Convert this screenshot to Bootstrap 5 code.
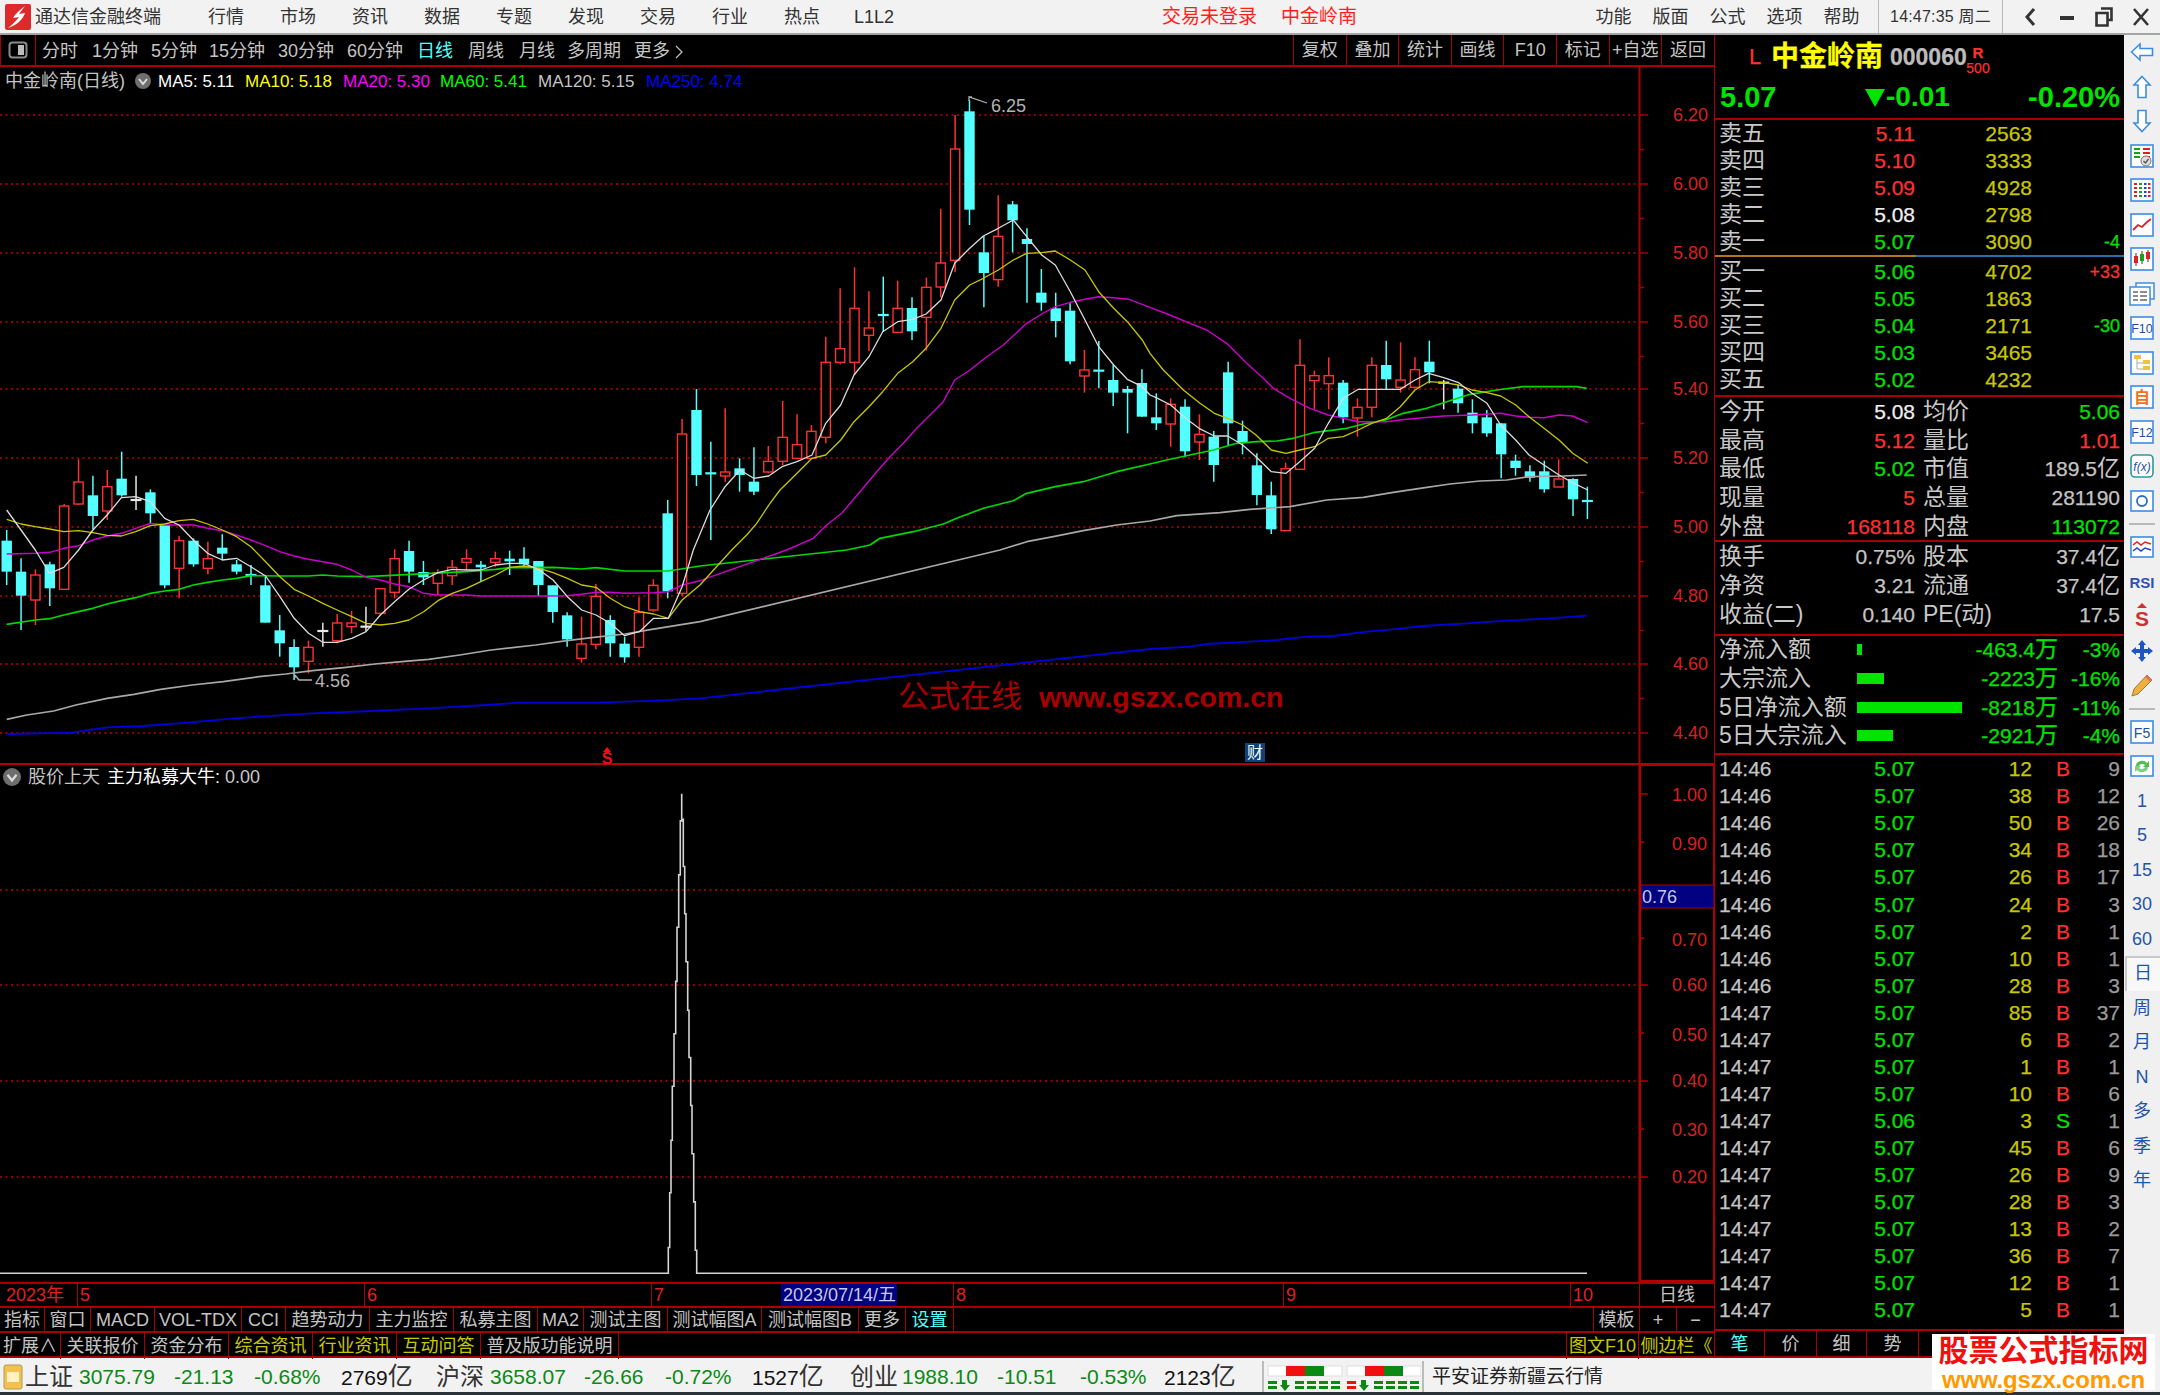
<!DOCTYPE html>
<html lang="zh-CN">
<head>
<meta charset="utf-8">
<title>通达信金融终端</title>
<link rel="stylesheet" href="https://cdn.jsdelivr.net/npm/bootstrap@5.3.0/dist/css/bootstrap.min.css">
<style>
:root{--tx-red:#a80000;--tx-gray:#c4c4c4;--tx-dgray:#9a9a9a;--tx-green:#00e400;--tx-yellow:#c8c800;--tx-pr:#ff3030;--tx-cy:#54ffff;--tx-side:#f0f0f0}
html,body{margin:0;background:#000;overflow:hidden}
.tx-app{width:2160px;height:1395px;font-family:"Liberation Sans","Noto Sans CJK SC",sans-serif;color:var(--tx-gray);position:relative;overflow:hidden;line-height:1}
.tx-title{height:35px;background:#f2f2f2;border-bottom:2px solid #a4a4a4;display:grid;grid-template-columns:35px 155px repeat(10,72px) 252px 119px 304px repeat(5,57px) 8px 125px 8px 38px 36px 37px 38px;align-items:center;color:#333;font-size:18px}
.tx-title>div{text-align:center;white-space:nowrap}
.tx-title .tx-l{text-align:left}
.tx-login{color:#ff1e1e;font-size:19px}
.tx-time{border-left:1px solid #bbb;border-right:1px solid #bbb;height:33px;line-height:33px;font-size:16px;letter-spacing:.2px}
.tx-work{height:1323px;display:grid;grid-template-columns:1714px 410px 36px}
.tx-left{display:flex;flex-direction:column;min-width:0}
.tx-tool{height:32px;border-bottom:2px solid var(--tx-red);display:grid;grid-template-columns:36px 6px 50px 59px 58px 69px 69px 70px 51px 51px 48px 67px 51px 608px repeat(7,52.6px) 1fr;align-items:center;font-size:18px;white-space:nowrap}
.tx-tool>div{padding-top:2px}
.tx-tool .tx-cell{height:30px;line-height:29px;padding-top:1px;text-align:center;border-left:1px solid var(--tx-red)}
.tx-tool .tx-tbtn{height:30px;padding-top:0;border-right:1px solid var(--tx-red);border-left:1px solid var(--tx-red);display:flex;align-items:center;justify-content:center}
.tx-cy{color:var(--tx-cy)}
.tx-yel{color:var(--tx-yellow)}
.tx-chart{height:1215px;position:relative}
.tx-svg{display:block;width:1714px;height:1215px}
.tx-svg text{font-family:"Liberation Sans","Noto Sans CJK SC",sans-serif}
.tx-legend{position:absolute;left:0;top:0;height:28px;width:1000px;padding-left:5px;display:grid;grid-template-columns:130px 23px 87px 98px 97px 98px 108px 1fr;align-items:center;font-size:17px;white-space:nowrap}
.tx-legend .tx-nm{font-size:18px}
.tx-sublegend{position:absolute;left:3px;top:698px;height:24px;display:flex;align-items:center;gap:7px;font-size:18px;white-space:nowrap}
.tx-mark{position:absolute;left:1245px;top:676px;width:20px;height:19px;background:#0c4274;color:#fff;font-size:16px;line-height:19px;text-align:center}
.tx-xaxis{height:24px;border-top:2px solid var(--tx-red);display:grid;grid-template-columns:78px 287px 287px 129px 116px 57px 330px 287px 68px 75px;font-size:18px;color:#e02020;white-space:nowrap}
.tx-xaxis>div{padding-left:2px;line-height:23px;border-right:1px solid var(--tx-red)}
.tx-xaxis .tx-first{padding-left:6px}
.tx-xaxis .tx-date{background:#000080;color:#c8c8e8;padding-left:2px;border-right:0;font-size:18px}
.tx-xaxis .tx-unit{color:var(--tx-gray);text-align:center;padding-left:0;border-right:0;border-left:1px solid var(--tx-red)}
.tx-tabs,.tx-ext{display:grid;border-top:2px solid var(--tx-red);font-size:18px;white-space:nowrap}
.tx-tabs{height:25px;grid-template-columns:45px 46px 64px 87px 44px 84px 84px 84px 46px 84px 94px 97px 47px 48px 1fr 46px 37px 38px}
.tx-ext{height:27px;border-bottom:2px solid var(--tx-red);grid-template-columns:61px 84px 84px 84px 84px 84px 138px 1fr 72px 75px}
.tx-tabs>div{text-align:center;line-height:25px;border-right:1px solid var(--tx-red)}
.tx-ext>div{text-align:center;line-height:26px;border-right:1px solid var(--tx-red)}
.tx-tabs>div:nth-last-child(-n+3){border-right:0;border-left:1px solid var(--tx-red)}
.tx-quote{border-left:1px solid var(--tx-red);display:flex;flex-direction:column;font-size:21px;-webkit-text-stroke:.25px}
.tx-qhead{height:85px;border-bottom:2px solid var(--tx-red);position:relative;padding:0 4px 0 5px}
.tx-qname{height:44px;display:flex;align-items:center;padding-left:29px;white-space:nowrap}
.tx-qname .tx-lm{color:var(--tx-pr);font-size:22px;width:22px}
.tx-qname .tx-cn{color:#ffff00;font-size:28px;font-weight:700;width:119px}
.tx-qname .tx-cd{color:#bcbcbc;font-size:23px;font-weight:700;width:77px}
.tx-rs{display:flex;flex-direction:column;align-items:center;color:var(--tx-pr);font-size:14px;margin-top:6px;gap:1px;width:22px}
.tx-rs b{font-size:15px}
.tx-qprice{height:34px;padding-top:2px;display:grid;grid-template-columns:145px 1fr 1fr;align-items:center;color:var(--tx-green);font-weight:700;font-size:28px;white-space:nowrap;-webkit-text-stroke:0}
.tx-qprice .tx-big{font-size:29px}
.tx-qprice .tx-dn{display:flex;align-items:center;gap:1px}
.tx-qprice>div:nth-child(3){text-align:right}
.tx-book{height:135px;padding:0 3px 0 4px}
.tx-buy{padding-top:1px;height:138px}
.tx-brow{height:27px;display:grid;grid-template-columns:196px 117px 88px;align-items:center}
.tx-lb{font-size:23px;white-space:nowrap;color:#c8c8c8;-webkit-text-stroke:0}
.tx-rt{text-align:right;white-space:nowrap}
.tx-vol{color:var(--tx-yellow)}
.tx-pr{color:var(--tx-pr)}
.tx-gr{color:var(--tx-green)}
.tx-wh{color:#f0f0f0}
.tx-dl{font-size:18px}
.tx-split{height:2px;flex:none;background:linear-gradient(to right,#b07818 0,#b07818 201px,#2a6ea8 201px)}
.tx-sect{border-top:2px solid var(--tx-red);padding:0 3px 0 4px;flex:none}
.tx-sect-b{padding-bottom:5px}
.tx-sect-c{padding-bottom:3px}
.tx-info{height:28.7px;display:grid;grid-template-columns:60px 136px 108px 97px;align-items:center}
.tx-info>.tx-lb2{padding-left:8px}
.tx-flow{height:28.7px;display:grid;grid-template-columns:138px 110px 91px 62px;align-items:center}
.tx-flow .tx-wan{font-size:23px}
.tx-barx{height:11px;background:var(--tx-green)}
.tx-tick{height:27.05px;display:grid;grid-template-columns:196px 117px 40px 48px;align-items:center;color:var(--tx-gray)}
.tx-ticks{flex:1;overflow:hidden;border-top:2px solid var(--tx-red);padding:0 3px 0 4px}
.tx-tick .tx-bs{text-align:center;padding-left:22px}
.tx-tick .tx-ct{color:var(--tx-dgray);text-align:right}
.tx-qtabs{height:29px;flex:none;display:grid;grid-template-columns:50px 52px 50px 52px 50px 51px 51px 1fr;border-top:2px solid var(--tx-red);border-bottom:2px solid var(--tx-red);font-size:18px;-webkit-text-stroke:0}
.tx-qtabs>div{text-align:center;line-height:27px;border-right:1px solid var(--tx-red)}
.tx-side{background:var(--tx-side);display:flex;flex-direction:column;align-items:center;color:#1f55a8;font-size:18px}
.tx-si{height:34.5px;flex:none;display:flex;align-items:center;justify-content:center;width:100%}
.tx-ssep{height:12px;flex:none;width:26px;display:flex;align-items:center}
.tx-ssep::before{content:"";display:block;width:100%;height:2px;background:#b8b8b8}
.tx-active{background:#f8f8f8;box-shadow:inset 2px 2px 0 #c8c8c8;margin-left:2px}
.tx-status{height:37px;background:#f2f2f2;padding-top:3px;border-bottom:3px solid #2a3338;display:grid;grid-template-columns:25px 54px 95px 80px 87px 95px 54px 94px 81px 87px 98px 52px 95px 83px 84px 98px 162px 1fr;align-items:center;font-size:21px;white-space:nowrap;color:#111}
.tx-status .tx-n{color:#0a8a14}
.tx-status .tx-idx{font-size:24px;color:#333}
.tx-status .tx-yi{font-size:25px;color:#333}
.tx-swid{border-left:2px solid #bbb;border-right:2px solid #bbb;height:31px;padding-left:3px;display:flex;align-items:center}
.tx-broker{font-size:19px;color:#222;padding-left:8px}
.tx-logo2{position:absolute;left:1932px;top:1334px;width:223px;height:56px;background:#fff;display:flex;flex-direction:column;align-items:center;justify-content:center;gap:3px}
.tx-logo2 .tx-a{color:#f01010;font-size:30px;font-weight:700;line-height:33px}
.tx-logo2 .tx-b{color:#ff9a00;font-size:24px;font-weight:700;line-height:20px;letter-spacing:-.2px}
</style>
</head>
<body>
<div class="tx-app">
  <header class="tx-title">
    <div class="d-flex align-items-center justify-content-end pe-1">
      <svg width="26" height="26" viewBox="0 0 26 26"><rect width="26" height="26" rx="2" fill="#de2a2a"/><path d="M20 2 C15 6 10 10 8 14 L14 13 C11 17 8 20 3 24 C10 22 18 16 20 9 L14 10 C16 7 18 5 20 2Z" fill="#fff"/></svg>
    </div>
    <div class="tx-l">通达信金融终端</div>
    <div>行情</div><div>市场</div><div>资讯</div><div>数据</div><div>专题</div><div>发现</div><div>交易</div><div>行业</div><div>热点</div><div>L1L2</div>
    <div></div>
    <div class="tx-l tx-login">交易未登录</div>
    <div class="tx-l tx-login">中金岭南</div>
    <div>功能</div><div>版面</div><div>公式</div><div>选项</div><div>帮助</div>
    <div></div>
    <div class="tx-time">14:47:35 周二</div>
    <div></div>
    <div><svg width="14" height="22" viewBox="0 0 14 22"><path d="M11 3 L4 11 L11 19" fill="none" stroke="#333" stroke-width="3"/></svg></div>
    <div><svg width="14" height="6" viewBox="0 0 14 6"><rect y="1" width="14" height="4" fill="#333"/></svg></div>
    <div><svg width="18" height="20" viewBox="0 0 18 20"><path d="M6 1.5H16.5V13H13M1.5 6H12.5V18.5H1.5Z" fill="none" stroke="#333" stroke-width="2.6"/></svg></div>
    <div><svg width="18" height="20" viewBox="0 0 18 20"><path d="M2 2L16 18M16 2L2 18" stroke="#333" stroke-width="2.6"/></svg></div>
  </header>

  <div class="tx-work">
    <div class="tx-left">
      <div class="tx-tool">
        <div class="tx-tbtn"><svg width="20" height="18" viewBox="0 0 20 18"><rect x="1.5" y="1.5" width="17" height="15" rx="3" fill="none" stroke="#8a8a8a" stroke-width="2"/><rect x="10" y="4" width="6" height="10" fill="#bdbdbd"/></svg></div>
        <div></div>
        <div>分时</div><div>1分钟</div><div>5分钟</div><div>15分钟</div><div>30分钟</div><div>60分钟</div>
        <div class="tx-cy">日线</div><div>周线</div><div>月线</div><div>多周期</div><div>更多 <svg width="8" height="16" viewBox="0 0 8 16"><path d="M1 2L7 8L1 14" fill="none" stroke="#c4c4c4" stroke-width="1.2"/></svg></div>
        <div></div>
        <div class="tx-cell">复权</div><div class="tx-cell">叠加</div><div class="tx-cell">统计</div><div class="tx-cell">画线</div><div class="tx-cell">F10</div><div class="tx-cell">标记</div><div class="tx-cell">+自选</div><div class="tx-cell">返回</div>
      </div>
      <div class="tx-chart">
        <svg class="tx-svg" id="txChart" viewBox="0 67 1714 1215" xmlns="http://www.w3.org/2000/svg"></svg>
        <div class="tx-legend">
          <span class="tx-nm">中金岭南(日线)</span>
          <svg width="16" height="16" viewBox="0 0 16 16"><circle cx="8" cy="8" r="8" fill="#6e6e6e"/><path d="M4 6 L8 11 L12 6" fill="none" stroke="#ddd" stroke-width="2"/></svg>
          <span class="text-white">MA5: 5.11</span>
          <span style="color:#ffff00">MA10: 5.18</span>
          <span style="color:#ff00ff">MA20: 5.30</span>
          <span style="color:#00ff00">MA60: 5.41</span>
          <span>MA120: 5.15</span>
          <span style="color:#0000ff">MA250: 4.74</span>
        </div>
        <div class="tx-sublegend">
          <svg width="18" height="18" viewBox="0 0 16 16"><circle cx="8" cy="8" r="8" fill="#6e6e6e"/><path d="M4 6 L8 11 L12 6" fill="none" stroke="#ddd" stroke-width="2"/></svg>
          <span>股价上天</span>
          <span class="text-white">主力私募大牛: <span style="color:#c8c8c8">0.00</span></span>
        </div>
        <div class="tx-mark">财</div>
      </div>
      <div class="tx-xaxis">
        <div class="tx-first">2023年</div><div>5</div><div>6</div><div class="border-end-0">7</div><div class="tx-date">2023/07/14/五</div><div></div><div>8</div><div>9</div><div class="border-end-0">10</div><div class="tx-unit">日线</div>
      </div>
      <div class="tx-tabs">
        <div>指标</div><div>窗口</div><div>MACD</div><div>VOL-TDX</div><div>CCI</div><div>趋势动力</div><div>主力监控</div><div>私募主图</div><div>MA2</div><div>测试主图</div><div>测试幅图A</div><div>测试幅图B</div><div>更多</div><div class="tx-cy">设置</div><div class="border-0"></div><div>模板</div><div>+</div><div>−</div>
      </div>
      <div class="tx-ext">
        <div>扩展∧</div><div>关联报价</div><div>资金分布</div><div class="tx-yel">综合资讯</div><div class="tx-yel">行业资讯</div><div class="tx-yel">互动问答</div><div>普及版功能说明</div><div></div><div class="tx-yel">图文F10</div><div class="tx-yel border-0">侧边栏《</div>
      </div>
    </div>

    <div class="tx-quote">
      <div class="tx-qhead">
        <div class="tx-qname">
          <span class="tx-lm">L</span><span class="tx-cn">中金岭南</span><span class="tx-cd">000060</span>
          <span class="tx-rs"><b>R</b><span>500</span></span>
        </div>
        <div class="tx-qprice"><div class="tx-big">5.07</div><div class="tx-dn"><svg width="20" height="19" viewBox="0 0 20 19"><path d="M0 1H20L10 19Z" fill="#00e400"/></svg><span>-0.01</span></div><div class="tx-big">-0.20%</div></div>
      </div>
      <div class="tx-book" id="txSell"></div>
      <div class="tx-split"></div>
      <div class="tx-book tx-buy" id="txBuy"></div>
      <div class="tx-sect" id="txInfoA"></div>
      <div class="tx-sect tx-sect-b" id="txInfoB"></div>
      <div class="tx-sect tx-sect-c" id="txFlow"></div>
      <div class="tx-ticks" id="txTicks"></div>
      <div class="tx-qtabs"><div class="tx-cy">笔</div><div>价</div><div>细</div><div>势</div><div></div><div></div><div></div><div class="border-0"></div></div>
    </div>

    <aside class="tx-side">
      <div class="tx-si"><svg width="24" height="20" viewBox="0 0 24 20"><path d="M1.5 10L10 2V6.5H22.5V13.5H10V18Z" fill="#fff" stroke="#3c8ce6" stroke-width="1.6"/></svg></div>
      <div class="tx-si"><svg width="20" height="24" viewBox="0 0 20 24"><path d="M10 1.5L18 10H14V22.5H6V10H2Z" fill="#fff" stroke="#3c8ce6" stroke-width="1.6"/></svg></div>
      <div class="tx-si"><svg width="20" height="24" viewBox="0 0 20 24"><path d="M10 22.5L18 14H14V1.5H6V14H2Z" fill="#fff" stroke="#3c8ce6" stroke-width="1.6"/></svg></div>
      <div class="tx-si"><svg width="24" height="24" viewBox="0 0 24 24"><rect x="1" y="1" width="22" height="22" fill="#fff" stroke="#3c8ce6" stroke-width="1.6"/><path d="M4 5h6M4 9h6M4 13h6" stroke="#19a019" stroke-width="2"/><path d="M13 5h7M13 9h7M13 13h7" stroke="#e02020" stroke-width="2"/><circle cx="16" cy="17" r="5" fill="#ddd" stroke="#777"/><path d="M13.5 17l2 2 3-4" fill="none" stroke="#555" stroke-width="1.3"/></svg></div>
      <div class="tx-si"><svg width="24" height="24" viewBox="0 0 24 24"><rect x="1" y="1" width="22" height="22" fill="#fff" stroke="#3c8ce6" stroke-width="1.6"/><path d="M4 6h3M4 10h3M4 14h3M4 18h3" stroke="#e02020" stroke-width="2"/><path d="M9 6h3M9 10h3M9 14h3M9 18h3" stroke="#19a019" stroke-width="2"/><path d="M14 6h2.500M14 10h2.500M14 14h2.500M14 18h2.500" stroke="#2040d0" stroke-width="2"/><path d="M18 6h2.500M18 10h2.500M18 14h2.500M18 18h2.500" stroke="#e02020" stroke-width="2"/></svg></div>
      <div class="tx-si"><svg width="24" height="24" viewBox="0 0 24 24"><rect x="1" y="1" width="22" height="22" fill="#fff" stroke="#3c8ce6" stroke-width="1.6"/><path d="M3 17L8 12L12 14L17 9L21 6" fill="none" stroke="#e02020" stroke-width="1.8"/></svg></div>
      <div class="tx-si"><svg width="24" height="24" viewBox="0 0 24 24"><rect x="1" y="1" width="22" height="22" fill="#fff" stroke="#3c8ce6" stroke-width="1.6"/><path d="M6 6V19M12 4V17M18 3V15" stroke="#333" stroke-width="1"/><rect x="4" y="9" width="4" height="7" fill="#e02020"/><rect x="10" y="7" width="4" height="7" fill="#19a019"/><rect x="16" y="5" width="4" height="7" fill="#e02020"/></svg></div>
      <div class="tx-si"><svg width="26" height="24" viewBox="0 0 26 24"><rect x="7" y="1" width="18" height="16" fill="#fff" stroke="#3c8ce6" stroke-width="1.5"/><rect x="1" y="5" width="20" height="18" fill="#fff" stroke="#3c8ce6" stroke-width="1.5"/><path d="M4 10h5M11 10h7M4 14h5M11 14h7M4 18h5M11 18h7" stroke="#666" stroke-width="1.6"/></svg></div>
      <div class="tx-si"><svg width="24" height="24" viewBox="0 0 24 24"><rect x="1" y="1" width="22" height="22" fill="#fff" stroke="#3c8ce6" stroke-width="1.6"/><text x="12" y="17" text-anchor="middle" font-size="12.5" fill="#2050a8">F10</text></svg></div>
      <div class="tx-si"><svg width="24" height="24" viewBox="0 0 24 24"><rect x="1" y="1" width="22" height="22" fill="#fff" stroke="#3c8ce6" stroke-width="1.6"/><path d="M7 8V18H13M7 12H13" fill="none" stroke="#aaa"/><rect x="4" y="4" width="7" height="4" fill="#f0c040"/><rect x="13" y="9" width="7" height="4" fill="#f0c040"/><rect x="13" y="15" width="7" height="4" fill="#f0c040"/></svg></div>
      <div class="tx-si"><svg width="24" height="24" viewBox="0 0 24 24"><rect x="1" y="1" width="22" height="22" fill="#fff" stroke="#3c8ce6" stroke-width="1.6"/><text x="12" y="18" text-anchor="middle" font-size="16" font-weight="700" fill="#f07020">自</text></svg></div>
      <div class="tx-si"><svg width="24" height="24" viewBox="0 0 24 24"><rect x="1" y="1" width="22" height="22" fill="#fff" stroke="#3c8ce6" stroke-width="1.6"/><text x="12" y="17" text-anchor="middle" font-size="12.5" fill="#2050a8">F12</text></svg></div>
      <div class="tx-si"><svg width="24" height="24" viewBox="0 0 24 24"><rect x="1" y="1" width="22" height="22" rx="4" fill="#fff" stroke="#2a9a9a" stroke-width="1.6"/><text x="12" y="16.500" text-anchor="middle" font-size="12" font-style="italic" fill="#2050a8">f(x)</text></svg></div>
      <div class="tx-si"><svg width="24" height="22" viewBox="0 0 24 22"><rect x="1" y="1" width="22" height="20" fill="#fff" stroke="#3c8ce6" stroke-width="1.6"/><circle cx="12" cy="11" r="5" fill="none" stroke="#2a70c0" stroke-width="1.8"/></svg></div>
      <div class="tx-ssep"></div>
      <div class="tx-si"><svg width="24" height="22" viewBox="0 0 24 22"><rect x="1" y="1" width="22" height="20" fill="#fff" stroke="#3c8ce6" stroke-width="1.6"/><path d="M3 9L7 6L11 9L15 6L21 8" fill="none" stroke="#e02020" stroke-width="1.5"/><path d="M3 15L7 12L11 15L15 12L21 14" fill="none" stroke="#2040d0" stroke-width="1.5"/></svg></div>
      <div class="tx-si"><svg width="28" height="20" viewBox="0 0 28 20"><text x="14" y="16" text-anchor="middle" font-size="15" font-weight="700" fill="#3050b0">RSI</text></svg></div>
      <div class="tx-si"><svg width="22" height="26" viewBox="0 0 22 26"><path d="M11 0L16 5H6Z" fill="#d03030"/><text x="11" y="23" text-anchor="middle" font-size="21" font-weight="700" fill="#d03030">S</text></svg></div>
      <div class="tx-si"><svg width="24" height="24" viewBox="0 0 24 24"><path d="M12 1L16 6H14V10H18V8L23 12L18 16V14H14V18H16L12 23L8 18H10V14H6V16L1 12L6 8V10H10V6H8Z" fill="#1f55c0"/></svg></div>
      <div class="tx-si"><svg width="24" height="24" viewBox="0 0 24 24"><path d="M17 2L22 7L8 21L2 23L4 16Z" fill="#f0b040" stroke="#9a7a30"/><path d="M17 2L22 7L20 9L15 4Z" fill="#e07070"/></svg></div>
      <div class="tx-ssep"></div>
      <div class="tx-si"><svg width="24" height="24" viewBox="0 0 24 24"><rect x="1" y="1" width="22" height="22" fill="#fff" stroke="#3c8ce6" stroke-width="1.6"/><text x="12" y="18" text-anchor="middle" font-size="14" fill="#2050a8">F5</text></svg></div>
      <div class="tx-si"><svg width="24" height="22" viewBox="0 0 24 22"><rect x="1" y="1" width="22" height="20" fill="#fff" stroke="#3c8ce6" stroke-width="1.6"/><path d="M6 11A6 5 0 0 1 17 8L19 6V12H13L15 10A3.500 3 0 0 0 9 11Z" fill="#50c050"/><path d="M18 12A6 5 0 0 1 7 15L5 17V11H11L9 13A3.500 3 0 0 0 15 12Z" fill="#80d080"/></svg></div>
      <div class="tx-si">1</div><div class="tx-si">5</div><div class="tx-si">15</div><div class="tx-si">30</div><div class="tx-si">60</div>
      <div class="tx-si tx-active">日</div><div class="tx-si">周</div><div class="tx-si">月</div><div class="tx-si">N</div><div class="tx-si">多</div><div class="tx-si">季</div><div class="tx-si">年</div>
    </aside>
  </div>

  <footer class="tx-status">
    <div class="d-flex justify-content-center"><svg width="20" height="26" viewBox="0 0 20 26"><rect x="1" y="1" width="18" height="24" rx="2" fill="#f4c050" stroke="#a8a050"/><rect x="4" y="8" width="12" height="10" fill="#fff2c0"/></svg></div>
    <div class="tx-idx">上证</div><div class="tx-n">3075.79</div><div class="tx-n">-21.13</div><div class="tx-n">-0.68%</div><div>2769<span class="tx-yi">亿</span></div>
    <div class="tx-idx">沪深</div><div class="tx-n">3658.07</div><div class="tx-n">-26.66</div><div class="tx-n">-0.72%</div><div>1527<span class="tx-yi">亿</span></div>
    <div class="tx-idx">创业</div><div class="tx-n">1988.10</div><div class="tx-n">-10.51</div><div class="tx-n">-0.53%</div><div>2123<span class="tx-yi">亿</span></div>
    <div class="tx-swid"><svg width="154" height="30" viewBox="0 0 154 30">
      <rect x="1" y="4" width="74" height="10" fill="#fff" stroke="#ddd"/><rect x="19" y="4" width="19" height="10" fill="#f01010"/><rect x="38" y="4" width="19" height="10" fill="#0a8a14"/>
      <rect x="80" y="4" width="74" height="10" fill="#fff" stroke="#ddd"/><rect x="98" y="4" width="19" height="10" fill="#f01010"/><rect x="117" y="4" width="19" height="10" fill="#0a8a14"/>
      <path d="M1 19h9v3h-9zM1 24h9v3h-9zM28 19h9v3h-9zM28 24h9v3h-9zM40 19h9v3h-9zM40 24h9v3h-9zM52 19h9v3h-9zM52 24h9v3h-9zM64 19h9v3h-9zM64 24h9v3h-9z" fill="#0a8a14"/>
      <path d="M15 18h5v5h3l-5 6-5-6h2z" fill="#0a8a14"/>
      <path d="M80 19h9v3h-9zM80 24h9v3h-9z" fill="#f01010"/>
      <path d="M107 19h9v3h-9zM107 24h9v3h-9zM119 19h9v3h-9zM119 24h9v3h-9zM131 19h9v3h-9zM131 24h9v3h-9zM143 19h9v3h-9zM143 24h9v3h-9z" fill="#0a8a14"/>
      <path d="M94 18h5v5h3l-5 6-5-6h2z" fill="#0a8a14"/></svg></div>
    <div class="tx-broker">平安证券新疆云行情</div>
  </footer>

  <div class="tx-logo2"><div class="tx-a">股票公式指标网</div><div class="tx-b">www.gszx.com.cn</div></div>
</div>

<script src="https://cdn.jsdelivr.net/npm/bootstrap@5.3.0/dist/js/bootstrap.bundle.min.js"></script>
<script>
(function(){
  var out=[];
  var z7=function(p){return [p[0]/2.24,430+p[1]/3];};
  var z8=function(p){return [650+p[0]/3,90+p[1]/3];};
  var z9=function(p){return [1150+p[0]/3,310+p[1]/3];};
  function line(x1,y1,x2,y2,c,w,extra){out.push('<line x1="'+x1+'" y1="'+y1+'" x2="'+x2+'" y2="'+y2+'" stroke="'+c+'" stroke-width="'+w+'"'+(extra||'')+'/>');}
  function text(x,y,s,c,sz,anchor,extra){out.push('<text x="'+x+'" y="'+y+'" fill="'+c+'" font-size="'+sz+'" text-anchor="'+(anchor||'start')+'" dominant-baseline="central"'+(extra||'')+'>'+s+'</text>');}
  var dash=' stroke-dasharray="2 3.500"';
  [115,184,253,322,389,458,527,596,664,733].forEach(function(y){line(0,y,1639,y,'#c00000',1.6,dash);});
  [890,985,1081,1177].forEach(function(y){line(0,y,1639,y,'#c00000',1.6,dash);});
  // axes
  line(1639.5,67,1639.5,1306,'#a80000',2);
  line(0,764,1714,764,'#b40000',2);
  out.push('<rect x="1640" y="765" width="74" height="516" fill="none" stroke="#b40000" stroke-width="2"/>');
  var labels=['6.20','6.00','5.80','5.60','5.40','5.20','5.00','4.80','4.60','4.40'];
  [115,184,253,322,389,458,527,596,664,733].forEach(function(y,i){
    line(1640,y,1648,y,'#a80000',1.5);
    if(i<9) line(1640,y+34.5,1644,y+34.5,'#a80000',1.5);
    text(1708,y,labels[i],'#d82020',18,'end');
  });
  [[795,'1.00'],[844,'0.90'],[940,'0.70'],[985,'0.60'],[1034.500,'0.50'],[1081,'0.40'],[1130,'0.30'],[1177,'0.20']].forEach(function(a){text(1707,a[0],a[1],'#d82020',18,'end');});
  [794,985,1081,1177].forEach(function(y){line(1641,y,1648,y,'#a80000',1.5);});
  [842,938,1033,1129].forEach(function(y){line(1641,y,1644,y,'#a80000',1.5);});
  out.push('<rect x="1641" y="885" width="73" height="23" fill="#000080" stroke="#b40000"/>');
  text(1642,897,'0.76','#c8c8e8',18);
  // x ticks
  [150,220,293,434,509,580,727,1036,1120,1203,1357,1428,1499].forEach(function(x){line(x,1282,x,1286,'#a80000',1.4);});
  // candles
  var c7=[['c',300,332,425,465],['c',385,425,497,600],['r',418,435,510,585],['c',395,403,475,528],['r',222,228,478,478],['r',88,156,222,225],['c',137,196,258,298],['r',120,170,243,270],['c',65,146,196,200],['w',137,210,210,240],['c',178,187,250,280],['c',285,285,466,475],['r',318,332,415,505],['c',325,332,403,410],['r',335,386,415,433],['c',313,353,371,390],['c',390,403,425,433],['cd',405,435,435,465],['c',440,466,578,578],['c',555,601,640,680],['c',628,651,712,750],['r',632,652,694,730],['w',578,603,603,650],['r',552,579,632,640],['r',543,579,590,610],['w',530,590,590,603],['r',475,476,550,555],['r',358,386,487,505],['c',332,363,425,458],['c',393,426,442,465],['r',418,428,460,495],['r',390,412,437,465],['r',358,386,397,420],['c',393,404,412,453],['r',365,386,397,410],['c',362,386,394,435],['c',352,386,403,410],['c',393,393,465,498],['c',466,466,546,578],['c',547,556,628,650],['r',560,642,685,698],['r',462,499,643,658],['c',556,570,640,680],['c',620,641,682,698],['r',502,547,652,680],['r',448,466,540,545],['c',210,250,484,505],['r',-33,12,490,498]];
  var c8=[['c',897,960,1155,1188],['cd',1055,1150,1150,1350],['r',955,1146,1158,1175],['c',1105,1135,1155,1205],['c',1072,1175,1205,1215],['r',1068,1114,1146,1150],['r',933,1042,1114,1125],['r',973,1064,1105,1105],['r',1005,1024,1105,1105],['r',740,817,1042,1060],['r',595,776,817,823],['r',532,655,817,855],['r',604,714,736,783],['cd',560,675,675,725],['r',572,655,727,728],['c',622,654,724,750],['r',563,592,682,782],['r',356,519,591,622],['r',75,177,511,547],['c',30,64,359,405],['c',438,487,549,652],['r',316,439,569,590],['c',333,343,391,487],['c',415,447,462,638],['c',537,608,638,662],['c',608,655,693,742],['c',640,662,814,823],['r',780,840,858,908],['cd',753,842,842,895],['c',825,870,908,948],['c',888,897,908,1030],['c',838,879,980,980]];
  var c9=[['c',250,322,340,360],['r',265,283,342,410],['c',268,290,424,442],['r',313,373,396,450],['c',363,380,465,515],['c',155,187,340,408],['c',332,363,397,433],['c',430,466,555,586],['c',515,556,658,672],['r',458,476,662,662],['r',88,166,478,478],['r',182,197,212,298],['r',142,197,221,298],['c',210,218,322,340],['r',265,292,324,380],['r',142,166,292,322],['c',92,165,208,238],['r',97,210,232,248],['r',142,179,232,235],['c',92,155,187,220],['w',210,218,218,298],['c',225,236,280,308],['c',268,308,340,370],['c',300,322,370,380],['c',340,340,433,505],['c',434,452,474,497],['c',466,484,503,515],['c',452,484,538,548],['r',448,507,531,530],['c',505,507,568,618],['cd',530,573,573,627]];
  function candle(i,d,fy){
    var x=6.7+14.37*i, t=d[0], wt=fy(d[1]), bt=fy(d[2]), bb=fy(d[3]), wb=fy(d[4]);
    var col=t=='r'?'#ff3030':(t=='w'?'#e8e8e8':'#54ffff');
    if(t=='w'||t=='cd'){line(x,wt,x,wb,col,1.5);line(x-5.500,bt,x+5.500,bt,col,2.2);return;}
    if(t=='r'){line(x,wt,x,bt,col,1.5);line(x,bb,x,wb,col,1.5);
      out.push('<rect x="'+(x-4.6)+'" y="'+bt+'" width="9.2" height="'+(bb-bt)+'" fill="#000" stroke="'+col+'" stroke-width="1.4"/>');return;}
    line(x,wt,x,wb,col,1.5);
    out.push('<rect x="'+(x-5.200)+'" y="'+bt+'" width="10.4" height="'+Math.max(bb-bt,2)+'" fill="'+col+'"/>');
  }
  c7.forEach(function(d,i){candle(i,d,function(v){return 430+v/3;});});
  c8.forEach(function(d,i){candle(48+i,d,function(v){return 90+v/3;});});
  c9.forEach(function(d,i){candle(80+i,d,function(v){return 310+v/3;});});
  // moving averages
  function ma(col,w,a,b,c){
    var pts=[].concat(a.map(z7),b.map(z8),c.map(z9)).map(function(p){return p[0].toFixed(1)+','+p[1].toFixed(1);}).join(' ');
    out.push('<polyline points="'+pts+'" fill="none" stroke="'+col+'" stroke-width="'+w+'" stroke-linejoin="round"/>');
  }
  ma('#0000d8',1.8,[[15,912],[160,908],[240,892],[320,888],[420,878],[500,868],[580,860],[700,850],[830,843],[960,835],[1090,825],[1160,818],[1340,818],[1470,812],[1568,805]],[],[[0,1017],[120,1010],[170,1002],[300,995],[380,990],[470,980],[550,978],[650,965],[730,958],[820,948],[950,940],[1070,932],[1200,925],[1310,917]]);
  ma('#a8a8a8',1.7,[[15,868],[60,855],[120,843],[170,825],[240,805],[300,793],[360,778],[430,765],[500,755],[580,740],[640,732],[700,722],[770,713],[840,702],[900,695],[960,688],[1030,675],[1100,660],[1200,645],[1270,632],[1330,622],[1400,612],[1460,598],[1568,575]],[[1050,1380],[1130,1355],[1210,1340],[1300,1322],[1400,1305],[1500,1293]],[[80,617],[210,608],[300,598],[420,590],[530,570],[640,562],[730,547],[810,535],[900,522],[990,513],[1070,510],[1137,500],[1240,498],[1310,495]]);
  ma('#00d800',1.7,[[15,583],[79,570],[111,566],[143,555],[176,545],[208,535],[240,522],[272,512],[304,503],[337,490],[369,483],[401,478],[433,465],[465,457],[498,450],[530,445],[562,437],[627,438],[691,438],[723,435],[755,438],[820,440],[1045,425],[1110,418],[1142,413],[1239,412],[1303,417],[1335,413],[1399,423],[1497,423],[1568,408]],[[590,1380],[660,1365],[690,1345],[790,1325],[880,1302],[920,1285],[1000,1255],[1090,1232],[1130,1210],[1216,1190],[1300,1175],[1400,1145],[1500,1122]],[[50,450],[120,435],[190,420],[260,400],[320,395],[380,393],[430,385],[490,368],[590,355],[650,340],[700,332],[760,310],[830,295],[890,275],[960,253],[1040,240],[1120,230],[1280,230],[1310,235]]);
  ma('#cc00cc',1.400,[[15,372],[79,370],[111,367],[143,355],[176,347],[208,330],[240,318],[272,310],[304,295],[337,280],[369,285],[433,285],[465,295],[498,302],[530,315],[562,330],[595,347],[627,365],[659,378],[691,388],[723,395],[755,403],[788,420],[820,442],[852,450],[884,462],[916,470],[949,490],[981,495],[1013,495],[1045,495],[1077,498],[1208,498],[1271,497],[1303,493],[1335,487],[1367,487],[1399,490],[1464,488],[1497,485],[1528,465],[1568,452]],[[410,1380],[490,1345],[530,1305],[575,1270],[630,1205],[680,1145],[720,1100],[760,1060],[800,1015],[850,965],[880,935],[914,870],[960,840],[1010,800],[1060,765],[1130,700],[1175,672],[1216,650],[1261,637],[1305,628],[1346,620],[1391,623],[1437,628],[1500,652]],[[60,15],[120,40],[170,60],[230,100],[290,160],[340,205],[370,235],[420,265],[480,295],[535,315],[580,325],[625,335],[665,335],[710,335],[770,328],[836,322],[881,318],[966,315],[1052,310],[1097,318],[1137,322],[1182,323],[1227,315],[1268,318],[1313,338]]);
  ma('#c8c800',1.300,[[15,268],[47,282],[79,290],[111,297],[143,305],[176,302],[208,308],[240,316],[272,318],[304,305],[337,287],[369,282],[401,272],[433,268],[465,282],[498,300],[530,320],[562,350],[595,395],[627,440],[659,478],[691,498],[723,520],[755,540],[788,560],[820,580],[852,585],[884,580],[916,570],[949,545],[981,512],[1013,490],[1045,475],[1077,455],[1110,435],[1142,412],[1174,408],[1208,415],[1239,428],[1271,445],[1303,465],[1335,472],[1367,505],[1399,530],[1432,545],[1464,552],[1497,565],[1528,510],[1568,465]],[[245,1380],[290,1335],[320,1300],[360,1240],[390,1200],[441,1150],[486,1105],[527,1095],[572,1050],[612,995],[657,950],[698,905],[743,850],[788,815],[828,775],[873,715],[914,630],[959,585],[1000,565],[1045,540],[1090,510],[1130,490],[1175,488],[1216,483],[1261,510],[1305,540],[1346,605],[1391,655],[1432,695],[1477,750],[1500,790]],[[40,180],[100,240],[150,280],[193,310],[233,325],[278,345],[318,375],[364,420],[408,430],[449,420],[494,410],[535,385],[580,380],[625,360],[665,340],[710,325],[751,290],[795,240],[836,215],[881,218],[926,225],[966,240],[1011,248],[1052,258],[1097,285],[1137,320],[1182,355],[1227,390],[1268,430],[1313,460]]);
  ma('#dcdcdc',1.300,[[15,240],[47,300],[79,360],[111,430],[143,412],[176,360],[208,300],[240,255],[272,203],[304,200],[337,215],[369,265],[401,285],[433,330],[465,370],[498,390],[530,385],[562,410],[595,438],[627,500],[659,565],[691,610],[723,637],[755,637],[788,625],[820,605],[852,555],[884,515],[916,478],[949,450],[981,428],[1013,418],[1045,420],[1077,420],[1110,405],[1142,400],[1174,400],[1208,420],[1239,450],[1271,500],[1303,540],[1335,555],[1367,580],[1399,617],[1432,605],[1464,565],[1497,565],[1528,470]],[[130,1380],[180,1260],[225,1190],[270,1140],[311,1165],[356,1158],[396,1130],[441,1115],[486,1095],[527,1000],[572,945],[612,855],[657,800],[698,725],[743,695],[788,688],[828,672],[873,630],[914,520],[959,475],[1000,438],[1045,415],[1090,390],[1130,440],[1175,495],[1216,525],[1261,605],[1305,690],[1346,770],[1391,825],[1432,868],[1477,890],[1500,915]],[[17,262],[62,285],[107,325],[147,355],[193,378],[233,378],[278,405],[318,440],[364,485],[408,490],[449,455],[494,415],[535,340],[580,265],[625,238],[665,238],[710,238],[751,238],[795,210],[836,190],[881,203],[926,218],[966,250],[1011,280],[1052,345],[1097,390],[1137,435],[1182,465],[1227,495],[1268,518],[1313,540]]);
  // hi / lo labels
  out.push('<path d="M969 101V97L987 103M972 97H969" fill="none" stroke="#b0b0b0" stroke-width="1.300"/>');
  text(991,106,'6.25','#b4b4b4',18);
  out.push('<path d="M295 675L299 680L312 680M295 675L295 678" fill="none" stroke="#b0b0b0" stroke-width="1.300"/>');
  text(315,681,'4.56','#b4b4b4',18);
  // S marker
  out.push('<path d="M607 747L611 752H603Z" fill="#f01010"/>');
  text(607,758,'S','#f01010',16,'middle',' font-weight="700"');
  // watermark
  text(898,696,'公式在线','#a80000',31);
  text(1039,697,'www.gszx.com.cn','#a80000',28.500,'start',' font-weight="700"');
  // sub chart: stepped spike
  var sp=[[0,1518],[505,1518],[505,1442],[509,1442],[509,1280],[513,1280],[513,1125],[517,1125],[517,965],[522,965],[522,810],[527,810],[527,655],[531,655],[531,495],[536,495],[536,340],[541,340],[541,180],[545,180],[545,100],[545,175],[550,175],[550,315],[554,315],[554,455],[558,455],[558,597],[563,597],[563,740],[567,740],[567,880],[572,880],[572,1022],[576,1022],[576,1165],[581,1165],[581,1307],[586,1307],[586,1450],[590,1450],[590,1518]];
  var spts=sp.map(function(p){return (p[0]===0?0:500+p[0]/3).toFixed(1)+','+(760+p[1]/2.958).toFixed(1);});
  spts.push('1587,'+(760+1518/2.958).toFixed(1));
  out.push('<polyline points="'+spts.join(' ')+'" fill="none" stroke="#d4d4d4" stroke-width="1.600"/>');
  document.getElementById('txChart').innerHTML=out.join('');

  // quote book
  function book(id,rows){document.getElementById(id).innerHTML=rows.map(function(r){
    return '<div class="tx-brow"><div class="d-flex justify-content-between align-items-center"><span class="tx-lb">'+r[0]+'</span><span class="'+r[2]+'">'+r[1]+'</span></div><div class="tx-rt tx-vol">'+r[3]+'</div><div class="tx-rt tx-dl '+(r[5]||'')+'">'+(r[4]||'')+'</div></div>';
  }).join('');}
  book('txSell',[['卖五','5.11','tx-pr','2563'],['卖四','5.10','tx-pr','3333'],['卖三','5.09','tx-pr','4928'],['卖二','5.08','tx-wh','2798'],['卖一','5.07','tx-gr','3090','-4','tx-gr']]);
  book('txBuy',[['买一','5.06','tx-gr','4702','+33','tx-pr'],['买二','5.05','tx-gr','1863'],['买三','5.04','tx-gr','2171','-30','tx-gr'],['买四','5.03','tx-gr','3465'],['买五','5.02','tx-gr','4232']]);
  function info(id,rows){document.getElementById(id).innerHTML=rows.map(function(r){
    return '<div class="tx-info"><div class="tx-lb">'+r[0]+'</div><div class="tx-rt '+r[2]+'">'+r[1]+'</div><div class="tx-lb tx-lb2">'+r[3]+'</div><div class="tx-rt '+r[5]+'">'+r[4]+'</div></div>';
  }).join('');}
  var yi=function(s){return s+'<span class="tx-lb">亿</span>';};
  info('txInfoA',[['今开','5.08','tx-wh','均价','5.06','tx-gr'],['最高','5.12','tx-pr','量比','1.01','tx-pr'],['最低','5.02','tx-gr','市值',yi('189.5'),''],['现量','5','tx-pr','总量','281190',''],['外盘','168118','tx-pr','内盘','113072','tx-gr']]);
  info('txInfoB',[['换手','0.75%','','股本',yi('37.4'),''],['净资','3.21','','流通',yi('37.4'),''],['收益(二)','0.140','','PE(动)','17.5','']]);
  document.getElementById('txFlow').innerHTML=[['净流入额',5,'-463.4','-3%'],['大宗流入',27,'-2223','-16%'],['5日净流入额',105,'-8218','-11%'],['5日大宗流入',36,'-2921','-4%']].map(function(r){
    return '<div class="tx-flow"><div class="tx-lb">'+r[0]+'</div><div><div class="tx-barx" style="width:'+r[1]+'px"></div></div><div class="tx-rt tx-gr">'+r[2]+'<span class="tx-wan">万</span></div><div class="tx-rt tx-gr">'+r[3]+'</div></div>';
  }).join('');
  var t=[['14:46','5.07',12,'B',9],['14:46','5.07',38,'B',12],['14:46','5.07',50,'B',26],['14:46','5.07',34,'B',18],['14:46','5.07',26,'B',17],['14:46','5.07',24,'B',3],['14:46','5.07',2,'B',1],['14:46','5.07',10,'B',1],['14:46','5.07',28,'B',3],['14:47','5.07',85,'B',37],['14:47','5.07',6,'B',2],['14:47','5.07',1,'B',1],['14:47','5.07',10,'B',6],['14:47','5.06',3,'S',1],['14:47','5.07',45,'B',6],['14:47','5.07',26,'B',9],['14:47','5.07',28,'B',3],['14:47','5.07',13,'B',2],['14:47','5.07',36,'B',7],['14:47','5.07',12,'B',1],['14:47','5.07',5,'B',1]];
  document.getElementById('txTicks').innerHTML=t.map(function(r){
    return '<div class="tx-tick"><div class="d-flex justify-content-between"><span>'+r[0]+'</span><span class="tx-gr">'+r[1]+'</span></div><div class="tx-rt tx-vol">'+r[2]+'</div><div class="tx-bs '+(r[3]=='S'?'tx-gr':'tx-pr')+'">'+r[3]+'</div><div class="tx-ct">'+r[4]+'</div></div>';
  }).join('');
})();
</script>
</body>
</html>
